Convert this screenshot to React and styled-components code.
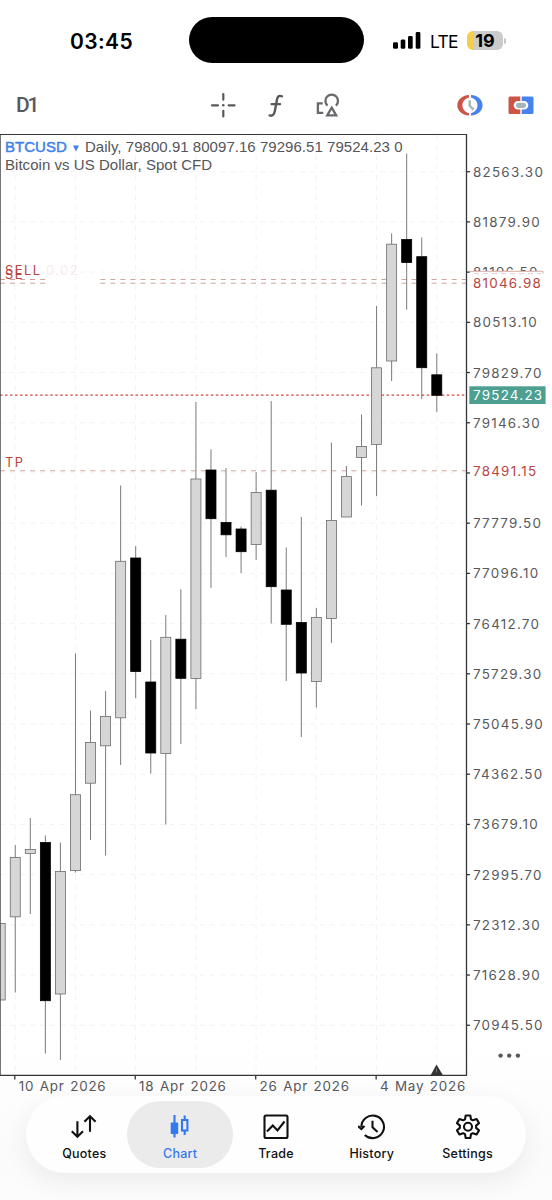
import React from 'react'
import styled, { createGlobalStyle } from 'styled-components'

// high, body top, body bottom, low (chart y units), 1 = bear
const candles = [
  [923.5, 923.5, 1000, 1000, 0],
  [845, 857.5, 916.8, 992.5, 0],
  [818, 849.5, 853.6, 914, 0],
  [835.5, 842.5, 1000.7, 1053.5, 1],
  [842.5, 871.5, 994, 1060, 0],
  [653.5, 794.7, 870.6, 872.5, 0],
  [710.5, 742.5, 783.2, 840, 0],
  [691, 716.4, 745.8, 855.5, 0],
  [485.5, 561.3, 717.8, 765, 0],
  [546, 558, 671.5, 698, 1],
  [640, 682, 753, 773.5, 1],
  [615, 637.3, 753.5, 824.5, 0],
  [589.3, 639.2, 678.3, 744, 1],
  [402, 479, 678.4, 709, 0],
  [449.3, 470, 518.7, 588, 1],
  [468, 522.5, 534.8, 557, 1],
  [526.5, 529, 551.7, 573, 1],
  [472, 492.4, 544.6, 560, 0],
  [401, 490.2, 586.7, 623.5, 1],
  [547.5, 590, 624.3, 681, 1],
  [517, 622.5, 673, 737.2, 1],
  [608, 617.6, 681.5, 707.5, 0],
  [442.5, 520.6, 618.6, 643, 0],
  [466, 476.6, 517, 517, 0],
  [414.5, 446.4, 457.5, 505.5, 0],
  [306, 367.8, 444.4, 496, 0],
  [233.3, 244.2, 361, 381, 0],
  [153.5, 239.5, 262.5, 309.7, 1],
  [237.5, 256.7, 367.7, 399, 1],
  [353.3, 374.8, 395.3, 412, 1],
]

const prices = [
  '82563.30',
  '81879.90',
  '81196.50',
  '80513.10',
  '79829.70',
  '79146.30',
  '',
  '77779.50',
  '77096.10',
  '76412.70',
  '75729.30',
  '75045.90',
  '74362.50',
  '73679.10',
  '72995.70',
  '72312.30',
  '71628.90',
  '70945.50',
]

const dates = ['10 Apr 2026', '18 Apr 2026', '26 Apr 2026', '4 May 2026']

const candleX = (i) => 0.2 + i * 15.055
const priceY = (i) => 171.7 + i * 50.21

function Candle({ index, data }) {
  const [high, top, bottom, low, bear] = data
  const x = candleX(index)
  return (
    <g>
      <Wick d={`M${x} ${high}V${top}M${x} ${bottom}V${low}`} />
      <Body
        $bear={bear}
        x={x - 5}
        y={top}
        width='10'
        height={bottom - top}
      />
    </g>
  )
}

function Chart() {
  return (
    <ChartSvg viewBox='0 134 552 966'>
      {prices.map((price, i) => (
        <GridLine key={i} d={`M0 ${priceY(i)}H466`} />
      ))}
      {[0, 1, 2, 3, 4, 5, 6, 7].map((i) => (
        <GridLine key={i} d={`M${15.2 + i * 60.22} 135V1075`} />
      ))}

      <OrderLine d='M0 279.5H46M100.3 279.5H466' />
      <OrderLine d='M0 283.2H46M100.3 283.2H466' />
      <OrderLine d='M0 470.8H466' />
      <BidLine d='M0 395.2H466' />
      {candles.map((data, i) => (
        <Candle key={i} index={i} data={data} />
      ))}

      <OrderText x='5' y='279'>
        SE
      </OrderText>
      <OrderText x='5' y='275.2'>
        SELL
      </OrderText>
      <OrderText x='46' y='275.2' opacity='0.1'>
        0.02
      </OrderText>
      <OrderText x='5' y='467'>
        TP
      </OrderText>

      <path d='M0.4 134V1075' stroke='#555' strokeWidth='0.9' />
      <path
        d='M0 134.4H466.5V1075.3H0'
        fill='none'
        stroke='#35363a'
        strokeWidth='1.3'
      />
      <path d='M436.5 1064.5L442.8 1075H430.8Z' fill='#333' />
      <path d='M436.5 1068.5V1072.5' stroke='#888' strokeWidth='0.8' />

      {prices.map((price, i) => (
        <g key={i}>
          <Tick d={`M467 ${priceY(i)}H470`} />
          <AxisText x='473' y={priceY(i) + 5}>
            {price}
          </AxisText>
        </g>
      ))}
      <rect x='470' y='271' width='80' height='20' fill='#fff' />
      <path
        d='M469.5 272.5V271.3H543V273.5'
        fill='none'
        stroke='#d2a09b'
        strokeWidth='0.9'
      />
      <path
        d='M474 273.6H541'
        stroke='#e3c3c0'
        strokeWidth='0.8'
        strokeDasharray='5 4'
      />
      <AxisText $red x='473' y='288.3'>
        81046.98
      </AxisText>
      <AxisText $red x='473' y='476'>
        78491.15
      </AxisText>
      <rect x='469.3' y='386.3' width='76.3' height='17.7' fill='#4c9f91' />
      <AxisText $light x='473' y='400'>
        79524.23
      </AxisText>

      {dates.map((date, i) => (
        <g key={date}>
          <Tick d={`M${14.8 + i * 120.45} 1075V1079.5`} />
          <AxisText $date x={18.7 + i * 120.4} y='1091'>
            {date}
          </AxisText>
        </g>
      ))}
      <g fill='#58595d'>
        <circle cx='500.6' cy='1055.6' r='2.2' />
        <circle cx='509.2' cy='1055.6' r='2.2' />
        <circle cx='517.9' cy='1055.6' r='2.2' />
      </g>
    </ChartSvg>
  )
}

const CrosshairIcon = () => (
  <svg width='26' height='26' fill='none' stroke='#58595d' strokeWidth='2.2'>
    <path
      strokeLinecap='round'
      d='M13.3 2V7.700M13.300 18.800V24.500M2 13.300H8M18.600 13.300H24.600'
    />
    <circle cx='13.3' cy='13.3' r='1.3' fill='#58595d' stroke='none' />
  </svg>
)

const FunctionIcon = () => (
  <svg
    width='18'
    height='26'
    fill='none'
    stroke='#58595d'
    strokeWidth='2.4'
    strokeLinecap='round'
  >
    <path d='M15 4.300C12.400 3.200 10.700 4.100 10.100 7L7.900 18.800C7.200 22.600 5.400 24.400 2.600 23.400M4.600 12.100H13' />
  </svg>
)

const ShapesIcon = () => (
  <svg width='24' height='26' fill='none' stroke='#68696c' strokeWidth='2.3'>
    <path d='M6.700 11.300H1.900V20.800H7.300M11.500 13.600A6.300 6.300 0 1 1 19.900 13.600' />
    <path d='M15.700 15.700L20.200 23.300H11.200Z' />
  </svg>
)

const ClockIcon = () => (
  <svg width='26' height='24' fill='none'>
    <path
      d='M12 2C5 2.500.3 7 .3 12.200S5 22.100 12 22.600V20.200C7.900 19.200 5.400 16 5.400 12.300S7.900 5.400 12 4.400Z'
      fill='#cb5648'
    />
    <path
      d='M14 2C21 2.500 25.600 7 25.600 12.200S21 22.100 14 22.600V20.200C18.100 19.200 20.500 16 20.500 12.300S18.100 5.400 14 4.400Z'
      fill='#4683ee'
    />
    <path d='M12.700 7.300V12.800L16.600 16.700' stroke='#a5b8be' strokeWidth='2.5' />
  </svg>
)

const OneClickIcon = () => (
  <svg width='26' height='20'>
    <path
      d='M2 1.500H12.300V6H10A4.300 4.300 0 0 0 10 14.600H12.300V19H2Q.5 19 .5 17.500V3Q.5 1.500 2 1.500Z'
      fill='#cb5648'
    />
    <path
      d='M24 1.500H13.700V6H16A4.300 4.300 0 0 1 16 14.600H13.700V19H24Q25.500 19 25.500 17.500V3Q25.500 1.500 24 1.500Z'
      fill='#4683ee'
    />
    <rect x='8' y='7.700' width='10' height='5.200' rx='2.600' fill='#a5b3ba' />
  </svg>
)

const QuotesIcon = () => (
  <TabSvg>
    <path d='M7.400 7.200V22.500M1.800 17.200L7.400 22.800L13 17.200M20 17.800V2.500M14.400 7.800L20 2.200L25.600 7.800' />
  </TabSvg>
)

const ChartIcon = () => (
  <TabSvg>
    <path d='M8.500 1V23.500' />
    <rect
      x='4.700'
      y='8.500'
      width='7.500'
      height='11.500'
      rx='.8'
      fill='currentColor'
      stroke='none'
    />
    <path d='M18.700 1.500V6M18.700 16.500V21' />
    <rect x='16' y='6' width='5.400' height='10.500' />
  </TabSvg>
)

const TradeIcon = () => (
  <TabSvg>
    <rect x='2.500' y='1.500' width='23' height='22.500' rx='1.500' />
    <path d='M5 17.500L10.800 11.500L15.500 16.500L22.500 7.500' />
  </TabSvg>
)

const HistoryIcon = () => (
  <TabSvg>
    <path d='M3.400 13A11.300 11.300 0 1 1 6.800 20.900M0 12L3.400 15L6.500 12M14.500 6.700V13.300L19.600 18' />
  </TabSvg>
)

const SettingsIcon = () => (
  <TabSvg>
    <path
      strokeLinejoin='round'
      d='M11.700 1.500H16.300L17 5.300L18.800 6.300L22.600 5L25 9.100L22.100 11.600V13.900L25 16.400L22.600 20.500L18.800 19.200L17 20.200L16.300 24H11.700L11 20.200L9.200 19.200L5.400 20.500L3 16.400L5.900 13.900V11.600L3 9.100L5.400 5L9.200 6.300L11 5.300Z'
    />
    <circle cx='14' cy='12.800' r='4' />
  </TabSvg>
)

const tabs = [
  { name: 'Quotes', Icon: QuotesIcon },
  { name: 'Chart', Icon: ChartIcon },
  { name: 'Trade', Icon: TradeIcon },
  { name: 'History', Icon: HistoryIcon },
  { name: 'Settings', Icon: SettingsIcon },
]

function App() {
  return (
    <Screen>
      <GlobalStyle />
      <StatusBar>
        <Time>03:45</Time>
        <Island />
        <Status>
          <svg width='28' height='17'>
            <rect x='0' y='10.200' width='5' height='6.600' rx='1.400' />
            <rect x='7.700' y='7.400' width='4.600' height='9.400' rx='1.400' />
            <rect x='15' y='4' width='4.700' height='12.800' rx='1.400' />
            <rect x='22.700' y='0' width='4.700' height='16.800' rx='1.400' />
          </svg>
          <Network>LTE</Network>
          <Battery>19</Battery>
          <BatteryCap />
        </Status>
      </StatusBar>

      <Toolbar>
        <Timeframe>D1</Timeframe>
        <Tools>
          <CrosshairIcon />
          <FunctionIcon />
          <ShapesIcon />
        </Tools>
        <TradeTools>
          <ClockIcon />
          <OneClickIcon />
        </TradeTools>
      </Toolbar>

      <ChartArea>
        <Chart />
        <Legend>
          <div>
            <b>BTCUSD</b>
            <Caret viewBox='0 0 6 6'>
              <path d='M0 0H6L3 6Z' />
            </Caret>
            Daily, 79800.91 80097.16 79296.51 79524.23 0
          </div>
          <div>Bitcoin vs US Dollar, Spot CFD</div>
        </Legend>
      </ChartArea>

      <TabBar>
        {tabs.map(({ name, Icon }) => (
          <Tab key={name} $active={name === 'Chart'}>
            <Icon />
            {name}
          </Tab>
        ))}
      </TabBar>
    </Screen>
  )
}

const GlobalStyle = createGlobalStyle`
  body {
    margin: 0;
    background: #fff;
  }
`

const Screen = styled.div`
  display: flex;
  flex-direction: column;
  width: 552px;
  height: 1200px;
  overflow: hidden;
  background: linear-gradient(#fff 1040px, #fbfbfb 1150px, #fcfcfc);
  font-family: Inter, 'Liberation Sans', sans-serif;
`

const StatusBar = styled.header`
  display: flex;
  align-items: center;
  height: 81px;
  flex-shrink: 0;
`

const Time = styled.div`
  width: 118.5px;
  padding: 1px 0 0 70px;
  font-size: 21px;
  font-weight: 600;
  letter-spacing: 0.4px;
`

const Island = styled.div`
  width: 175px;
  height: 46px;
  margin-bottom: 1px;
  border-radius: 23px;
  background: #000;
`

const Status = styled.div`
  display: flex;
  align-items: center;
  margin-left: 29.5px;
`

const Network = styled.span`
  margin-left: 9px;
  width: 37px;
  padding-top: 1px;
  font-size: 17.5px;
  letter-spacing: -0.8px;
`

const Battery = styled.span`
  width: 36px;
  height: 19px;
  border-radius: 6px;
  background: linear-gradient(90deg, #f6cd46 7px, #cbcbcb 7px);
  font-size: 18px;
  font-weight: 700;
  line-height: 19px;
  text-align: center;
`

const BatteryCap = styled.i`
  width: 2px;
  height: 6px;
  margin-left: 1px;
  border-radius: 0 3px 3px 0;
  background: #c4c4c4;
`

const Toolbar = styled.nav`
  display: flex;
  align-items: center;
  height: 48px;
  padding-bottom: 5px;
  flex-shrink: 0;
`

const Timeframe = styled.div`
  width: 194px;
  padding-left: 16px;
  color: #58595d;
  font-family: Roboto, sans-serif;
  font-size: 21px;
  font-weight: 500;
  letter-spacing: -2.2px;
`

const Tools = styled.div`
  display: flex;
  align-items: center;
  gap: 31px;
`

const TradeTools = styled.div`
  display: flex;
  align-items: center;
  gap: 25px;
  margin-left: auto;
  padding-right: 18.5px;
`

const ChartArea = styled.main`
  position: relative;
  height: 962px;
  flex-shrink: 0;
`

const ChartSvg = styled.svg`
  display: block;
  width: 552px;
  height: 966px;
`

const Legend = styled.div`
  position: absolute;
  top: 4px;
  left: 5px;
  color: #55565a;
  font-family: 'Liberation Sans', Arial, sans-serif;
  font-size: 15px;
  line-height: 18px;
  letter-spacing: 0.04px;
  white-space: nowrap;

  b {
    color: #3f82ea;
    font-weight: 400;
    -webkit-text-stroke: 0.5px #3f82ea;
  }
`

const Caret = styled.svg`
  width: 6px;
  height: 7px;
  margin: 0 6px 0 6px;
  fill: #3f82ea;
`

const GridLine = styled.path`
  stroke: #f3f3f3;
  stroke-dasharray: 5 5;
`

const OrderLine = styled.path`
  stroke: #cfa49c;
  stroke-dasharray: 5 5.04;
`

const BidLine = styled.path`
  stroke: #d0453f;
  stroke-width: 1.3;
  stroke-dasharray: 2.5 2.52;
`

const Wick = styled.path`
  stroke: #6c6c6c;
  stroke-width: 0.9;
`

const Body = styled.rect`
  fill: ${(props) => (props.$bear ? '#000' : '#d6d6d6')};
  stroke: ${(props) => (props.$bear ? '#000' : '#6c6c6c')};
  stroke-width: 0.8;
`

const Tick = styled.path`
  stroke: #35363a;
  stroke-width: 1.3;
`

const AxisText = styled.text`
  fill: ${(props) => (props.$light ? '#fff' : props.$red ? '#b8443c' : '#57585c')};
  font-size: 13.4px;
  letter-spacing: ${(props) => (props.$date ? '0.8px' : '1.25px')};
  word-spacing: 1px;
`

const OrderText = styled.text`
  fill: #b8443c;
  font-size: 12.8px;
  letter-spacing: 1.5px;
`

const TabBar = styled.footer`
  display: flex;
  justify-content: center;
  align-items: center;
  z-index: 1;
  width: 500px;
  height: 77px;
  margin: 0 auto;
  flex-shrink: 0;
  border-radius: 39px;
  background: #fefefe;
  box-shadow: 0 8px 28px rgba(0, 0, 0, 0.07);
`

const Tab = styled.div`
  display: flex;
  flex-direction: column;
  align-items: center;
  gap: 5px;
  width: 106px;
  height: 54px;
  margin: 0 -5.1px;
  padding-top: 13px;
  border-radius: 34px;
  background: ${(props) => (props.$active ? '#ebebeb' : 'none')};
  color: ${(props) => (props.$active ? '#3478ee' : '#111')};
  font-size: 12.5px;
  font-weight: 500;
  line-height: 16px;
  letter-spacing: 0.25px;
`

const TabSvg = styled.svg.attrs({ viewBox: '0 0 28 27' })`
  width: 28px;
  height: 27px;
  fill: none;
  stroke: currentColor;
  stroke-width: 2.1;
`

export default App
